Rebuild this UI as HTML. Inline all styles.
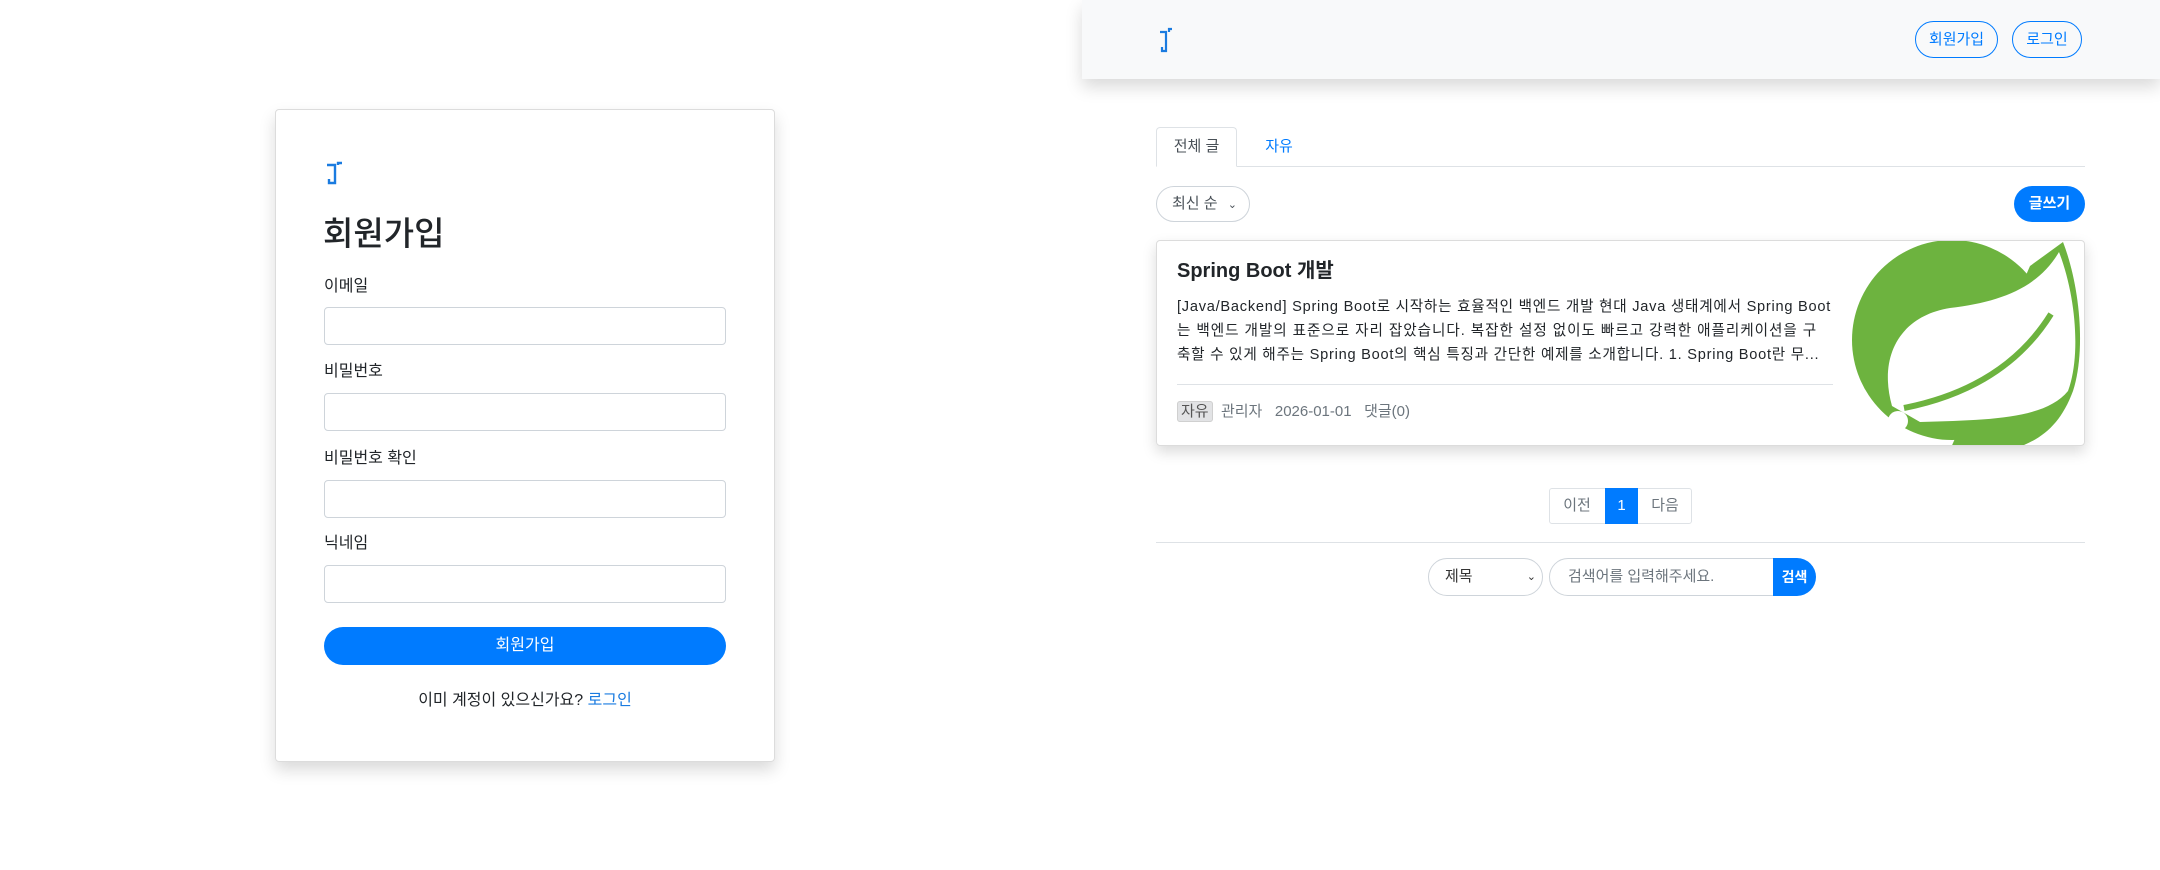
<!DOCTYPE html>
<html><head><meta charset="utf-8"><style>
*{box-sizing:border-box;margin:0;padding:0}
body{width:2160px;height:870px;background:#fff;position:relative;overflow:hidden;font-family:"Liberation Sans","Noto Sans CJK KR",sans-serif;color:#212529;font-size:16px}
.a{position:absolute}
.card{left:275px;top:109px;width:500px;height:653px;border:1px solid #dcdcdc;border-radius:4px;box-shadow:0 8px 16px rgba(0,0,0,.15)}
.lbl{left:324px;font-size:16px;line-height:24px}
.inp{left:324px;width:402px;height:38px;border:1px solid #ced4da;border-radius:4px}
.btnp{background:#007bff;color:#fff;border-radius:20px;text-align:center}
.nav{left:1082px;top:0;width:1078px;height:79px;background:#f8f9fa;box-shadow:0 8px 16px rgba(0,0,0,.15)}
.ob{border:1px solid #007bff;color:#007bff;border-radius:20px;text-align:center;font-size:15px;line-height:35px;height:37px}
.g{color:#6c757d}
.ln{white-space:nowrap;display:block}
</style></head><body>
<div class="a card"></div>
<svg class="a" style="left:326px;top:161px" width="24" height="26" viewBox="0 0 24 26"><path d="M1 4H9V22H3V18M12 4V2H16" fill="none" stroke="#1a7be0" stroke-width="2.4"/></svg>
<div class="a" style="left:323px;top:212px;font-size:33px;font-weight:500;line-height:44px">회원가입</div>
<div class="a lbl" style="top:275px">이메일</div>
<div class="a inp" style="top:307px"></div>
<div class="a lbl" style="top:360px">비밀번호</div>
<div class="a inp" style="top:393px"></div>
<div class="a lbl" style="top:447px">비밀번호 확인</div>
<div class="a inp" style="top:480px"></div>
<div class="a lbl" style="top:532px">닉네임</div>
<div class="a inp" style="top:565px"></div>
<div class="a btnp" style="left:324px;top:627px;width:402px;height:38px;line-height:38px;font-size:16px">회원가입</div>
<div class="a" style="left:324px;top:689px;width:402px;text-align:center;line-height:24px">이미 계정이 있으신가요? <span style="color:#1a7be0">로그인</span></div>

<div class="a nav"></div>
<svg class="a" style="left:1159px;top:27px" width="20" height="26" viewBox="0 0 20 26"><path d="M1 5H7V24H3V20M10 5V2H13" fill="none" stroke="#1a7be0" stroke-width="2.2"/></svg>
<div class="a ob" style="left:1915px;top:21px;width:83px">회원가입</div>
<div class="a ob" style="left:2012px;top:21px;width:70px">로그인</div>

<div class="a" style="left:1156px;top:166px;width:929px;border-top:1px solid #dee2e6"></div>
<div class="a" style="left:1156px;top:127px;width:81px;height:40px;border:1px solid #dee2e6;border-bottom:1px solid #fff;border-radius:4px 4px 0 0;background:#fff;text-align:center;line-height:38px;font-size:15px;color:#495057">전체 글</div>
<div class="a" style="left:1254px;top:127px;width:50px;line-height:40px;text-align:center;font-size:15px;color:#007bff">자유</div>
<div class="a" style="left:1156px;top:186px;width:94px;height:36px;border:1px solid #ced4da;border-radius:18px;font-size:15px;line-height:34px;padding-left:15px;color:#495057">최신 순 <span style="font-size:11px;margin-left:6px">⌄</span></div>
<div class="a btnp" style="left:2014px;top:186px;width:71px;height:36px;line-height:36px;font-size:15px;font-weight:bold">글쓰기</div>

<div class="a" style="left:1156px;top:240px;width:929px;height:206px;border:1px solid #dcdcdc;border-radius:4px;box-shadow:0 6px 14px rgba(0,0,0,.15);overflow:hidden">
<svg class="a" style="left:683px;top:-5px" width="250" height="214" viewBox="0 0 250 214">
<circle cx="112" cy="104" r="100" fill="#6db33f"/>
<path d="M190 30L223 6C240 50 246 115 233 155C220 190 200 205 170 214L110 214Z" fill="#6db33f"/>
<path d="M52 170C38 120 60 80 110 72C160 66 198 52 219 16C236 60 241 120 228 155C205 183 150 184 80 186Z" fill="#fff"/>
<path d="M64 172Q165 152 211 78" fill="none" stroke="#6db33f" stroke-width="6"/>
<circle cx="58" cy="185" r="10" fill="#fff"/>
</svg>
</div>
<div class="a" style="left:1177px;top:256px;font-size:20px;font-weight:bold;line-height:30px">Spring Boot 개발</div>
<div class="a" style="left:1177px;top:295px;font-size:14.6px;line-height:24px;color:#212529">
<span class="ln" style="letter-spacing:.75px">[Java/Backend] Spring Boot로 시작하는 효율적인 백엔드 개발 현대 Java 생태계에서 Spring Boot</span>
<span class="ln" style="letter-spacing:.95px">는 백엔드 개발의 표준으로 자리 잡았습니다. 복잡한 설정 없이도 빠르고 강력한 애플리케이션을 구</span>
<span class="ln" style="letter-spacing:.75px">축할 수 있게 해주는 Spring Boot의 핵심 특징과 간단한 예제를 소개합니다. 1. Spring Boot란 무...</span>
</div>
<div class="a" style="left:1177px;top:384px;width:656px;border-top:1px solid #dee2e6"></div>
<div class="a g" style="left:1177px;top:400px;font-size:15px;line-height:24px"><span style="background:#e2e3e5;border:1px solid #d0d0d0;border-radius:3px;padding:1px 3px;color:#555">자유</span>&nbsp; 관리자&nbsp;&nbsp; 2026-01-01&nbsp;&nbsp; 댓글(0)</div>

<div class="a" style="left:1549px;top:488px;width:143px;height:36px;border:1px solid #dee2e6;border-radius:3px"></div>
<div class="a g" style="left:1549px;top:488px;width:56px;line-height:36px;text-align:center;font-size:15px">이전</div>
<div class="a" style="left:1605px;top:488px;width:33px;height:36px;background:#007bff;color:#fff;line-height:36px;text-align:center;font-size:15px">1</div>
<div class="a g" style="left:1638px;top:488px;width:54px;line-height:36px;text-align:center;font-size:15px">다음</div>
<div class="a" style="left:1156px;top:542px;width:929px;border-top:1px solid #dee2e6"></div>
<div class="a" style="left:1428px;top:558px;width:115px;height:38px;border:1px solid #ced4da;border-radius:19px;line-height:36px;padding-left:16px;font-size:15px;color:#333">제목<span style="position:absolute;right:6px;font-size:11px">⌄</span></div>
<div class="a" style="left:1549px;top:558px;width:230px;height:38px;border:1px solid #ced4da;border-radius:19px 0 0 19px;line-height:36px;padding-left:18px;font-size:15px;color:#6c757d">검색어를 입력해주세요.</div>
<div class="a" style="left:1773px;top:558px;width:43px;height:38px;background:#007bff;color:#fff;border-radius:0 19px 19px 0;line-height:38px;text-align:center;font-size:14px;font-weight:bold">검색</div>
</body></html>
